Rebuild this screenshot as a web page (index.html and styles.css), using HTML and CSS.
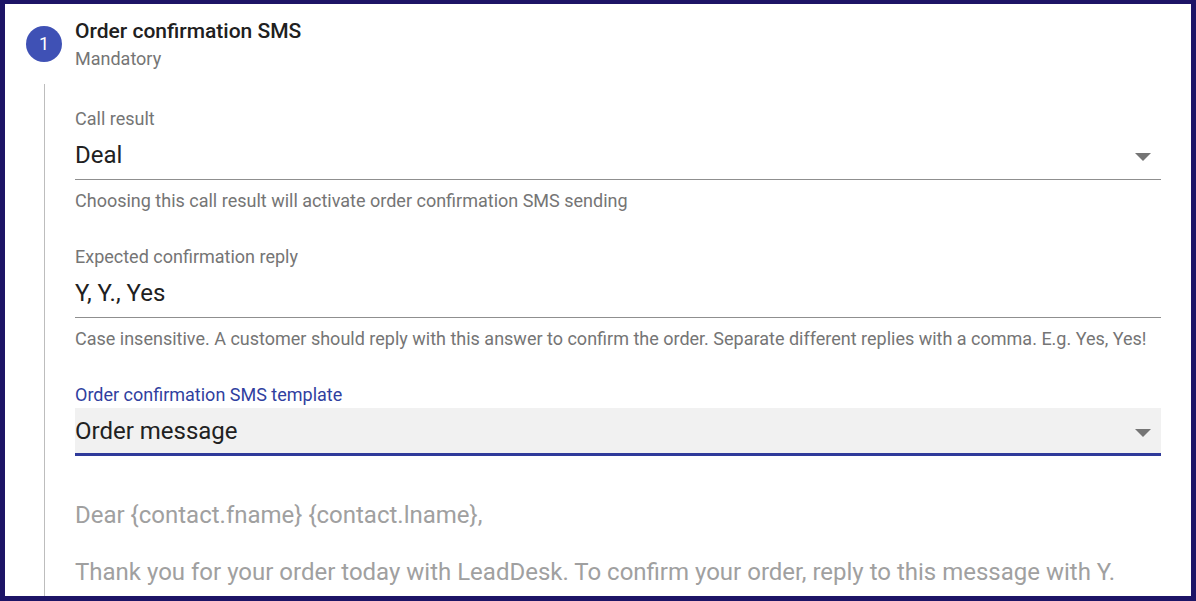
FILE: index.html
```html
<!DOCTYPE html>
<html>
<head>
  <meta charset="utf-8">
  <title>Order confirmation SMS</title>
  <link rel="stylesheet" href="styles.css">
</head>
<body>

<div class="frame">

  <!-- step header -->
  <div class="step-head">
    <div class="step-num">1</div>
    <div class="step-titles">
      <div class="step-title">Order confirmation SMS</div>
      <div class="step-sub">Mandatory</div>
    </div>
  </div>

  <!-- step body -->
  <div class="step-body">

    <div class="field">
      <div class="label">Call result</div>
      <div class="select">
        <span class="value">Deal</span>
        <span class="arrow"></span>
      </div>
      <div class="hint">Choosing this call result will activate order confirmation SMS sending</div>
    </div>

    <div class="field">
      <div class="label">Expected confirmation reply</div>
      <div class="select">
        <span class="value">Y, Y., Yes</span>
      </div>
      <div class="hint">Case insensitive. A customer should reply with this answer to confirm the order. Separate different replies with a comma. E.g. Yes, Yes!</div>
    </div>

    <div class="field">
      <div class="label focused">Order confirmation SMS template</div>
      <div class="select filled">
        <span class="value">Order message</span>
        <span class="arrow"></span>
      </div>
    </div>

    <div class="message">
      <p>Dear {contact.fname} {contact.lname},</p>
      <p>Thank you for your order today with LeadDesk. To confirm your order, reply to this message with Y.</p>
    </div>

  </div>
</div>

</body>
</html>
```

FILE: styles.css
```css
html, body {
  margin: 0;
  padding: 0;
  background: #1d1466;
}

body {
  font-family: Roboto, "Liberation Sans", sans-serif;
  color: #212121;
}

.frame {
  box-sizing: border-box;
  width: 1196px;
  height: 601px;
  overflow: hidden;
  background: #fff;
  border: 5px solid #1d1466;
  border-top-width: 4px;
}

.step-head {
  display: flex;
  align-items: flex-start;
  padding: 16px 0 0 21px;
}

.step-num {
  width: 36px;
  height: 36px;
  margin-top: 6px;
  border-radius: 50%;
  background: #3f51b5;
  color: #fff;
  font-size: 18px;
  line-height: 36px;
  text-align: center;
}

.step-titles {
  margin-left: 13px;
}

.step-title {
  font-size: 21px;
  font-weight: 500;
  line-height: 22px;
  color: #202020;
}

.step-sub {
  margin-top: 7px;
  font-size: 18px;
  line-height: 20px;
  color: #757575;
}

.step-body {
  margin: 15px 0 0 39px;
  padding: 25px 30px 0 30px;
  border-left: 1px solid #bdbdbd;
  min-height: 600px;
}

.field {
  margin-bottom: 36px;
}

.label {
  font-size: 18px;
  line-height: 20px;
  color: #757575;
}

.label.focused {
  color: #303f9f;
}

.select {
  display: flex;
  align-items: center;
  justify-content: space-between;
  padding: 12px 10px 10px 0;
  border-bottom: 1px solid #8f8f8f;
}

.select.filled {
  margin-top: 3px;
  padding: 9px 10px 8px 0;
  background: #f1f1f1;
  border-bottom: 3px solid #2f3a9a;
}

.value {
  font-size: 24px;
  line-height: 28px;
}

.arrow {
  width: 0;
  height: 0;
  margin-top: 3px;
  border-left: 8px solid transparent;
  border-right: 8px solid transparent;
  border-top: 8px solid #757575;
}

.hint {
  margin-top: 11px;
  font-size: 18px;
  line-height: 20px;
  color: #757575;
}

.message {
  margin-top: -36px;
  padding-top: 45px;
  color: #a0a0a0;
  font-size: 24px;
  line-height: 28px;
}

.message p {
  margin: 0 0 29px 0;
}
```
